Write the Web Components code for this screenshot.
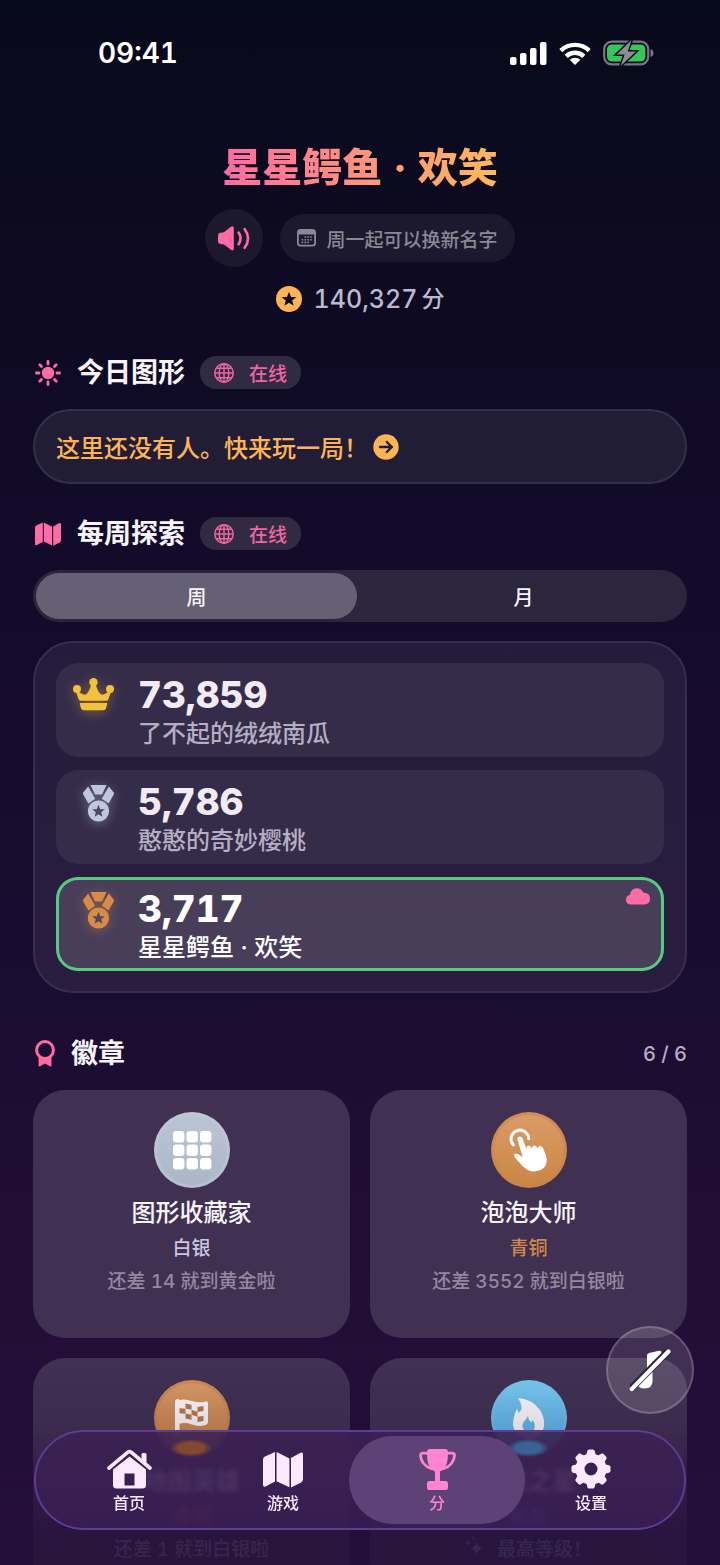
<!DOCTYPE html>
<html lang="zh-CN">
<head>
<meta charset="utf-8">
<meta name="viewport" content="width=device-width, initial-scale=1">
<title>分</title>
<style>
  html,
  body {
    margin: 0;
    height: 100%;
    background: #240e3a;
  }

  body {
    font-family: Inter, "Noto Sans CJK SC", sans-serif;
    font-weight: 500;
    font-variant-numeric: tabular-nums;
    color: #f8f4fc;
    --pink: #ff6ba3;
    --amber: #ffb454;
    --muted: #b6aec4;
    --silver: #bfc6de;
    --bronze: #d98a45;
  }
</style>
</head>
<body>
<score-screen>
  <status-bar slot="status" time="09:41"></status-bar>

  <profile-header name="星星鳄鱼 · 欢笑" hint="周一起可以换新名字" points="140,327" unit="分"></profile-header>

  <board-section icon="sun" heading="今日图形">
    <online-chip slot="extra">在线</online-chip>
    <empty-banner>这里还没有人。快来玩一局！</empty-banner>
  </board-section>

  <board-section icon="map" heading="每周探索">
    <online-chip slot="extra">在线</online-chip>
    <period-switch></period-switch>
    <score-panel>
      <score-row rank="crown" score="73,859">了不起的绒绒南瓜</score-row>
      <score-row rank="silver" score="5,786">憨憨的奇妙樱桃</score-row>
      <score-row rank="bronze" score="3,717" mine>星星鳄鱼 · 欢笑</score-row>
    </score-panel>
  </board-section>

  <board-section class="badges" icon="rosette" heading="徽章" count="6 / 6">
    <badge-grid>
      <badge-card icon="grid" tier="silver" heading="图形收藏家" level="白银">还差 14 就到黄金啦</badge-card>
      <badge-card icon="tap" tier="bronze" heading="泡泡大师" level="青铜">还差 3552 就到白银啦</badge-card>
      <badge-card icon="flag" tier="bronze" heading="地图英雄" level="青铜">还差 1 就到白银啦</badge-card>
      <badge-card icon="flame" tier="diamond" heading="连胜之星" level="钻石" max>最高等级！</badge-card>
    </badge-grid>
  </board-section>

  <music-button slot="overlay"></music-button>
  <tab-bar slot="overlay"></tab-bar>
</score-screen>

<script>
const STAR = "M0 -1 L.26 -.33 L.95 -.31 L.41 .13 L.59 .81 L0 .43 L-.59 .81 L-.41 .13 L-.95 -.31 L-.26 -.33Z";

// name: [width, height, markup]
const ICONS = {
  signal: [37, 23, `<rect x="0" y="15" width="6.5" height="8" rx="2"/><rect x="10" y="11" width="6.5" height="12" rx="2"/><rect x="20" y="6" width="6.5" height="17" rx="2"/><rect x="30" y="0" width="6.5" height="23" rx="2"/>`],
  wifi: [32, 23, `<g fill="none" stroke="currentColor" stroke-width="4.4"><path d="M1.8 8.6a20.5 20.5 0 0 1 28.4 0"/><path d="M7.2 14.3a12.7 12.7 0 0 1 17.6 0"/></g><path d="M10.6 17.8a8 8 0 0 1 10.8 0L16 23Z"/>`],
  battery: [52, 26, `<rect x="1.2" y="1.7" width="44" height="22.6" rx="7.5" fill="none" stroke="#777783" stroke-width="2.2"/><rect x="4" y="4.4" width="38.4" height="17.2" rx="5" fill="#34c759"/><path d="M47.5 9v8q3-1 3-4t-3-4Z" fill="#777783"/><path d="M28.5 0 13.6 14.4h8L17.6 26 33 11.4h-8.2Z" fill="#8d8d97" stroke="#0a0a1c" stroke-width="3" paint-order="stroke"/>`],
  speaker: [32, 25, `<path d="M0 9.5Q0 7 2.4 6.7L6 6.2 12.6 1Q15.8-1 15.8 2.4V22.2Q15.8 25.8 12.6 23.6L6 18.6 2.4 18.1Q0 17.8 0 15.3Z"/><g fill="none" stroke="currentColor" stroke-width="2.6" stroke-linecap="round"><path d="M20.6 6.6q4 5.8 0 11.6"/><path d="M26.6 3q7 9.4 0 18.8"/></g>`],
  calendar: [19, 18, `<path fill-rule="evenodd" d="M3.5 0H15.5Q19 0 19 3.5V14Q19 17.5 15.5 17.5H3.5Q0 17.5 0 14V3.5Q0 0 3.5 0ZM1.8 5.5V14Q1.8 15.8 3.6 15.8H15.4Q17.2 15.8 17.2 14V5.5Z"/><path d="M7.5 7.2h1.6v1.6H7.5zM10.3 7.2h1.6v1.6h-1.6zM13.1 7.2h1.6v1.6h-1.6zM4.6 9.9h1.6v1.6H4.6zM7.5 9.9h1.6v1.6H7.5zM10.3 9.9h1.6v1.6h-1.6zM13.1 9.9h1.6v1.6h-1.6zM4.6 12.6h1.6v1.6H4.6zM7.5 12.6h1.6v1.6H7.5zM10.3 12.6h1.6v1.6h-1.6z"/>`],
  star: [26, 26, `<circle cx="13" cy="13" r="13"/><path fill="#0e0a22" transform="translate(13 13.5) scale(7.8)" d="${STAR}"/>`],
  arrow: [26, 26, `<circle cx="13" cy="13" r="12.7"/><path d="M7 13h12M13.8 8l5 5-5 5" fill="none" stroke="#221d37" stroke-width="2.4" stroke-linecap="round" stroke-linejoin="round"/>`],
  sun: [26, 26, `<circle cx="13" cy="13" r="6.2"/><path d="M13 1.4v2.6M13 22v2.6M1.4 13h2.6M22 13h2.6M4.8 4.8l1.7 1.7M19.5 19.5l1.7 1.7M4.8 21.2l1.7-1.7M19.5 6.5l1.7-1.7" fill="none" stroke="currentColor" stroke-width="2.8" stroke-linecap="round"/>`],
  map: [26, 24, `<path d="M0 5.6Q0 4.2 1.3 3.6L7.8.6V19.8L2 22.9Q0 23.8 0 21.9ZM8.8 .6 17.2 4.8V23.6L8.8 19.6ZM18.2 4.6 24 1.3Q26 .4 26 2.3V18.4Q26 19.7 24.8 20.4L18.2 23.8Z"/>`],
  globe: [20, 20, `<g fill="none" stroke="currentColor" stroke-width="1.5"><circle cx="10" cy="10" r="9.2"/><ellipse cx="10" cy="10" rx="4.8" ry="9.2"/><path d="M10 .8v18.4M.8 10h18.4M2.5 5.2h15M2.5 14.8h15"/></g>`],
  rosette: [20, 27, `<circle cx="10" cy="10" r="8.4" fill="none" stroke="currentColor" stroke-width="3"/><path d="M3.6 17Q10 21 16.4 17V25.5Q16.4 27 15 26.2L10 23.4 5 26.2Q3.6 27 3.6 25.5Z"/>`],
  crown: [41, 33, `<circle cx="4" cy="11" r="4"/><circle cx="20.5" cy="4.2" r="4.2"/><circle cx="37" cy="11" r="4"/><path d="M2.8 13 5.5 21Q6 22.8 7.5 22.8H33.5Q35 22.8 35.5 21L38.2 13 36 13.6Q30.8 17.4 28.3 16.6 25.7 15.6 22.8 7H18.2Q15.3 15.6 12.7 16.6 10.2 17.4 5 13.6ZM6.7 25H34.3L33.4 29Q32.6 32.2 30 32.2H11Q8.4 32.2 7.6 29Z"/>`],
  medal: [31, 37, `<path d="M7.4 0H23.6L19 9.6H12ZM5.2 1.6 12.2 13.8 5.4 18.6 0 9Q-.2 8.2.1 7.8ZM25.8 1.6 18.8 13.8 25.6 18.6 31 9Q31.2 8.2 30.9 7.8Z"/><circle cx="15.5" cy="26" r="10.6"/><path fill="#4c465e" transform="translate(15.5 26.4) scale(6.6)" d="${STAR}"/>`],
  cloud: [24, 17, `<path d="M5 16.5Q0 16.5 0 11.8 0 7.6 3.8 7 5 .3 10.8.2 15 .2 17.2 4.4 24 4.6 24 10.6 24 16.5 18.2 16.5Z"/>`],
  grid: [38, 38, [0, 13.5, 27].map(y => [0, 13.5, 27].map(x => `<rect x="${x}" y="${y}" width="11.4" height="11.4" rx="3.2"/>`).join("")).join("")],
  tap: [39, 43, `<path d="M4.3 15.8A8.8 8.8 0 1 1 19.7 9.8" fill="none" stroke="currentColor" stroke-width="3" stroke-linecap="round"/><path d="M8.4 10.5Q7.9 8.2 10.3 7.5 12.7 7.2 13.5 9.3L17.2 19.5Q17.2 16.7 19.6 16.4 21.6 16.4 22.8 19.4 23 16.7 25.2 16.6 27.4 16.7 28.6 19.4 29 16.9 31.2 17.1 33.2 17.5 34.2 19.6L36.5 25Q39.5 33 35.5 38 31 43 22.5 42.3 18 41.5 14 37.5L5.8 28.5Q4.2 25.8 6.2 24.8 8.5 24.2 10.5 26L13.8 28.3Z"/>`],
  flag: [33, 38, `<path d="M0 3Q0 0 2.5 0 4 0 4.6 1 10-.6 17 2 25 4.5 30.5 2.4 33 2 33 4.5V23Q33 25.3 30.5 26 24 28 17 25.5 10 23 4.5 24.8V36Q4.5 38 2.2 38 0 38 0 36Z"/><path fill="#c07b44" d="M10.5 4.6 16.5 5.8V10.8L10.5 9.6ZM22.5 8 28.5 7V12L22.5 13ZM4.5 9.2 10.5 9.8V14.8L4.5 14.2ZM16.5 10.8 22.5 12.8V17.8L16.5 15.8ZM10.5 14.6 16.5 15.8V20.8L10.5 19.6ZM22.5 17.8 28.5 17V22L22.5 23Z"/>`],
  flame: [32, 40, `<path fill-rule="evenodd" d="M5 0Q19 1 27 12 32 20 31 28 29 40 16 40 2 39 0 27 0 19 3.8 11 5 12 5.5 15 8 12.5 8.6 11 8.5 4.5 5 0ZM15 18Q13.5 21 11 23.5 8 28 11 32 16 37 20.5 32.5 23.5 27 19.5 22L18.5 24.5Q15.5 22.5 15 18Z"/>`],
  sparkles: [18, 20, `<path d="M11.5 5Q12.3 11.7 18 12.5 12.3 13.3 11.5 20 10.7 13.3 5 12.5 10.7 11.7 11.5 5ZM3 3.5Q3.4 6.3 6 6.7 3.4 7.1 3 10 2.6 7.1 0 6.7 2.6 6.3 3 3.5ZM8 0Q8.2 1.8 10 2 8.2 2.2 8 4 7.8 2.2 6 2 7.8 1.8 8 0Z"/>`],
  nomusic: [44, 44, `<path d="M19 7.5Q19 5.6 21 5L31 2.8Q33.5 2.3 33.5 5V9.5Q33.5 11.2 31.8 11.6L24.5 13.5V33.5Q24.5 40 16.5 40.5 10 40.5 10 35.5 10 31.5 14 30.5L19 29.5Z"/><path d="M3.8 40 39.8 3.5" stroke="#2b2333" stroke-width="7"/><path d="M3.8 41 40.5 3.5" stroke="currentColor" stroke-width="4.4" stroke-linecap="round"/>`],
  house: [45, 40, `<path d="M2 19 20.6 3.4Q22.5 2 24.4 3.4L43 19" fill="none" stroke="currentColor" stroke-width="3.6" stroke-linecap="round" stroke-linejoin="round"/><path d="M34.5 5.5Q34.5 4 36 4H38Q39.5 4 39.5 5.5V14.5L34.5 10.3Z"/><path fill-rule="evenodd" d="M6 20.5 22.5 7.5 39 20.5V36Q39 39.5 35.5 39.5H9.5Q6 39.5 6 36ZM17.5 24.5V36.5H27.5V24.5Z"/>`],
  trophy: [37, 41, `<path d="M8 3Q8 0 11 0H26Q29 0 29 3C29 15 27 20 21 22.5V32H27Q29 32 29 34.5V39Q29 41 27 41H10Q8 41 8 39V34.5Q8 32 10 32H16V22.5C10 20 8 15 8 3Z"/><path d="M9 4.2H4Q1.5 4.2 1.5 6.5 2 16 13 20M28 4.2H33Q35.5 4.2 35.5 6.5 35 16 24 20" fill="none" stroke="currentColor" stroke-width="2.8"/>`],
  gear: [40, 40, `<circle cx="20" cy="20" r="11" fill="none" stroke="currentColor" stroke-width="9"/>` + [0, 45, 90, 135, 180, 225, 270, 315].map(a => `<path transform="rotate(${a} 20 20)" d="M15 7.5 16.3 2Q16.8.5 18 .5H22Q23.2.5 23.7 2L25 7.5Z"/>`).join("")]
};

class UiIcon extends HTMLElement {
  connectedCallback() {
    if (this.shadowRoot) return;
    const [w, h, markup] = ICONS[this.getAttribute("name")];
    this.attachShadow({ mode: "open" }).innerHTML = `
      <style>
        :host { display: block; flex: none; }
        svg { display: block; overflow: visible; }
      </style>
      <svg width="${this.getAttribute("width") || w}" viewBox="0 0 ${w} ${h}" fill="currentColor" aria-hidden="true">${markup}</svg>
    `;
  }
}

class StatusBar extends HTMLElement {
  connectedCallback() {
    this.attachShadow({ mode: "open" }).innerHTML = `
      <style>
        :host {
          display: flex;
          align-items: center;
          justify-content: space-between;
          height: 106px;
          padding: 0 65px 0 98px;
          color: #fff;
        }
        time { font-size: 28px; font-weight: 600; }
        .icons { display: flex; align-items: center; gap: 12px; }
      </style>
      <time>${this.getAttribute("time")}</time>
      <div class="icons">
        <ui-icon name="signal"></ui-icon>
        <ui-icon name="wifi"></ui-icon>
        <ui-icon name="battery"></ui-icon>
      </div>
    `;
  }
}

class ProfileHeader extends HTMLElement {
  connectedCallback() {
    this.attachShadow({ mode: "open" }).innerHTML = `
      <style>
        :host {
          display: flex;
          flex-direction: column;
          align-items: center;
          padding-top: 34px;
        }
        h1 {
          margin: 0 0 13px;
          font-size: 40px;
          font-weight: 800;
          line-height: 56px;
          color: transparent;
          background: linear-gradient(90deg, #ff6ba3, #ffb85a);
          background-clip: text;
          -webkit-background-clip: text;
        }
        .actions { display: flex; align-items: center; gap: 17px; }
        button {
          display: grid;
          place-items: center;
          width: 58px;
          height: 58px;
          padding: 0;
          border: 0;
          border-radius: 50%;
          background: #1c192f;
          color: var(--pink);
        }
        .hint {
          display: flex;
          align-items: center;
          gap: 10px;
          height: 48px;
          padding: 0 17px;
          border-radius: 24px;
          background: #1c192f;
          color: #8b8896;
          font-size: 19px;
        }
        .points {
          display: flex;
          align-items: center;
          gap: 12px;
          margin: 16px 0 0;
          font-size: 25px;
          line-height: 32px;
          color: #bdb9cc;
        }
        .points ui-icon { color: var(--amber); }
        .points span { display: flex; gap: 4px; }
        .points small { font-size: 23px; }
      </style>
      <h1>${this.getAttribute("name")}</h1>
      <div class="actions">
        <button type="button" aria-label="朗读名字"><ui-icon name="speaker"></ui-icon></button>
        <div class="hint"><ui-icon name="calendar"></ui-icon><span>${this.getAttribute("hint")}</span></div>
      </div>
      <p class="points">
        <ui-icon name="star"></ui-icon>
        <span>${this.getAttribute("points")}<small>${this.getAttribute("unit")}</small></span>
      </p>
    `;
  }
}

class BoardSection extends HTMLElement {
  connectedCallback() {
    this.attachShadow({ mode: "open" }).innerHTML = `
      <style>
        :host { display: block; margin-top: 33px; }
        header {
          display: flex;
          align-items: center;
          height: 33px;
          margin-bottom: 20px;
        }
        ui-icon { margin: 0 16px 0 2px; color: var(--pink); }
        h2 { margin: 0 15px 0 0; font-size: 27px; font-weight: 700; line-height: 35px; }
        .count { margin-left: auto; font-size: 20px; color: var(--muted); }
      </style>
      <header>
        <ui-icon name="${this.getAttribute("icon")}"></ui-icon>
        <h2>${this.getAttribute("heading")}</h2>
        <slot name="extra"></slot>
        <span class="count">${this.getAttribute("count") || ""}</span>
      </header>
      <slot></slot>
    `;
  }
}

class OnlineChip extends HTMLElement {
  connectedCallback() {
    this.attachShadow({ mode: "open" }).innerHTML = `
      <style>
        :host {
          display: flex;
          align-items: center;
          gap: 15px;
          height: 33px;
          padding: 0 14px;
          border-radius: 16px;
          background: #302a42;
          color: #ee66a2;
          font-size: 19px;
        }
      </style>
      <ui-icon name="globe"></ui-icon>
      <slot></slot>
    `;
  }
}

class EmptyBanner extends HTMLElement {
  connectedCallback() {
    this.attachShadow({ mode: "open" }).innerHTML = `
      <style>
        :host { display: block; }
        a {
          display: flex;
          align-items: center;
          gap: 5px;
          box-sizing: border-box;
          min-height: 75px;
          padding: 0 21px;
          border: 2px solid #353049;
          border-radius: 38px;
          background: #221d37;
          color: var(--amber);
          font-size: 24px;
          text-decoration: none;
        }
      </style>
      <a href="#play"><span><slot></slot></span><ui-icon name="arrow"></ui-icon></a>
    `;
  }
}

class PeriodSwitch extends HTMLElement {
  connectedCallback() {
    this.attachShadow({ mode: "open" }).innerHTML = `
      <style>
        :host {
          display: flex;
          gap: 6px;
          height: 46px;
          margin-bottom: 19px;
          padding: 3px;
          border-radius: 26px;
          background: #2b253d;
        }
        button {
          flex: 1;
          padding: 0;
          border: 0;
          border-radius: 23px;
          background: none;
          color: inherit;
          font: inherit;
          font-size: 20px;
        }
        button[aria-pressed="true"] { background: #656074; }
      </style>
      <button type="button" aria-pressed="true">周</button>
      <button type="button" aria-pressed="false">月</button>
    `;
    const buttons = this.shadowRoot.querySelectorAll("button");
    buttons.forEach(button => {
      button.addEventListener("click", () => {
        buttons.forEach(b => b.setAttribute("aria-pressed", b === button));
      });
    });
  }
}

class ScorePanel extends HTMLElement {
  connectedCallback() {
    this.attachShadow({ mode: "open" }).innerHTML = `
      <style>
        :host {
          display: flex;
          flex-direction: column;
          gap: 13px;
          padding: 20px 21px;
          border: 2px solid #372e4d;
          border-radius: 40px;
          background: linear-gradient(#231d3b, #2a1d3f);
        }
      </style>
      <slot></slot>
    `;
  }
}

class ScoreRow extends HTMLElement {
  connectedCallback() {
    const rank = this.getAttribute("rank");
    const mine = this.hasAttribute("mine");
    this.attachShadow({ mode: "open" }).innerHTML = `
      <style>
        :host {
          position: relative;
          display: flex;
          gap: 24px;
          padding: 12px 16px 4px;
          border-radius: 22px;
          background: #352c49;
        }
        :host([mine]) {
          background: #483e5a;
          box-shadow: inset 0 0 0 3px #56cb7d;
        }
        .rank {
          display: flex;
          justify-content: flex-end;
          width: 42px;
          padding-top: 3px;
        }
        .crown { color: #f3c13c; filter: drop-shadow(0 2px 6px #f3c13c66); }
        .silver { color: var(--silver); filter: drop-shadow(0 2px 6px #bfc6de66); }
        .bronze { color: var(--bronze); filter: drop-shadow(0 2px 6px #d98a4566); }
        strong { display: block; font-size: 37px; font-weight: 800; line-height: 40px; color: #f0ebf4; }
        .name { font-size: 24px; line-height: 38px; color: var(--muted); }
        :host([mine]) strong,
        :host([mine]) .name { color: #fff; }
        .cloud { position: absolute; top: 11px; right: 14px; color: var(--pink); }
      </style>
      <div class="rank ${rank}"><ui-icon name="${rank === "crown" ? "crown" : "medal"}"></ui-icon></div>
      <div>
        <strong>${this.getAttribute("score")}</strong>
        <div class="name"><slot></slot></div>
      </div>
      ${mine ? `<ui-icon class="cloud" name="cloud"></ui-icon>` : ""}
    `;
  }
}

class BadgeGrid extends HTMLElement {
  connectedCallback() {
    this.attachShadow({ mode: "open" }).innerHTML = `
      <style>
        :host { display: grid; grid-template-columns: 1fr 1fr; gap: 20px; }
      </style>
      <slot></slot>
    `;
  }
}

class BadgeCard extends HTMLElement {
  connectedCallback() {
    const max = this.hasAttribute("max");
    this.attachShadow({ mode: "open" }).innerHTML = `
      <style>
        :host {
          display: flex;
          flex-direction: column;
          align-items: center;
          box-sizing: border-box;
          min-height: 248px;
          padding: 22px 16px;
          border-radius: 32px;
          background: #403152;
        }
        .medallion {
          display: grid;
          place-items: center;
          box-sizing: border-box;
          width: 76px;
          height: 76px;
          border-radius: 50%;
          color: #fff;
          border: 3px solid #c9854899;
          background: linear-gradient(#dc9c67, #c98544) border-box;
        }
        :host([tier="silver"]) .medallion { border-color: #c3c8de88; background: linear-gradient(#bcc5d4, #aab7c6) border-box; }
        :host([tier="diamond"]) .medallion { border-color: #7ac6ee88; background: linear-gradient(#7accf4, #55b3e8) border-box; }
        h3 { margin: 7px 0 4px; font-size: 24px; font-weight: 500; line-height: 36px; }
        .level { margin-bottom: 5px; font-size: 19px; line-height: 28px; color: #d08a4c; }
        :host([tier="silver"]) .level { color: #c9c6dd; }
        :host([tier="diamond"]) .level { color: #5bb8ea; }
        .progress { display: flex; gap: 14px; font-size: 19px; line-height: 28px; color: #94879f; }
        :host([max]) .progress { color: #7a94c0; }
      </style>
      <div class="medallion"><ui-icon name="${this.getAttribute("icon")}"></ui-icon></div>
      <h3>${this.getAttribute("heading")}</h3>
      <div class="level">${this.getAttribute("level")}</div>
      <div class="progress">${max ? `<ui-icon name="sparkles"></ui-icon>` : ""}<span><slot></slot></span></div>
    `;
  }
}

class MusicButton extends HTMLElement {
  connectedCallback() {
    this.attachShadow({ mode: "open" }).innerHTML = `
      <style>
        :host { position: fixed; right: 26px; bottom: 151px; }
        button {
          display: grid;
          place-items: center;
          width: 88px;
          height: 88px;
          padding: 0;
          border: 2px solid #ffffff30;
          border-radius: 50%;
          background: #ffffff24;
          color: #fff;
        }
      </style>
      <button type="button" aria-label="打开音乐"><ui-icon name="nomusic"></ui-icon></button>
    `;
  }
}

class TabBar extends HTMLElement {
  connectedCallback() {
    const tabs = [
      ["house", "首页", "#home"],
      ["map", "游戏", "#games"],
      ["trophy", "分", "#scores"],
      ["gear", "设置", "#settings"]
    ];
    this.attachShadow({ mode: "open" }).innerHTML = `
      <style>
        :host { position: fixed; left: 34px; right: 34px; bottom: 35px; }
        nav {
          display: flex;
          padding: 4px 16px;
          border: 2px solid #5f3c92;
          border-radius: 50px;
          /* glints of the medallions that lie under the glass */
          background:
            radial-gradient(closest-side, #824830 60%, transparent) 134px 7px / 42px 18px no-repeat,
            radial-gradient(closest-side, #3a6297 60%, transparent) 471px 7px / 42px 18px no-repeat,
            linear-gradient(#3b2153e6 30%, #3f2159b3 60%);
          backdrop-filter: blur(2px);
        }
        a {
          position: relative;
          z-index: 0;
          flex: 1;
          display: flex;
          flex-direction: column;
          align-items: center;
          height: 77px;
          padding-top: 11px;
          color: #fbeaff;
          font-size: 16px;
          line-height: 24px;
          text-decoration: none;
        }
        .glyph { display: grid; place-items: center; height: 44px; }
        a[aria-current]::before {
          content: "";
          position: absolute;
          z-index: -1;
          inset: 0 -11px;
          border-radius: 44px;
          background: #5c4277;
        }
        a[aria-current] { color: #ff85d0; }
      </style>
      <nav>
        ${tabs.map(([icon, label, href]) => `
          <a href="${href}" ${icon === "trophy" ? `aria-current="page"` : ""}>
            <span class="glyph"><ui-icon name="${icon}" ${icon === "map" ? `width="40"` : ""}></ui-icon></span>
            <span>${label}</span>
          </a>
        `).join("")}
      </nav>
    `;
  }
}

class ScoreScreen extends HTMLElement {
  connectedCallback() {
    this.attachShadow({ mode: "open" }).innerHTML = `
      <style>
        :host {
          display: block;
          height: 100vh;
          overflow: hidden;
          background: linear-gradient(#070a1a, #0c0a1e 10%, #0e0a23 20%, #140b2b 38%, #1a0c30 60%, #210e36 80%, #250f3a);
        }
        main {
          height: 100%;
          box-sizing: border-box;
          overflow-y: auto;
          scrollbar-width: none;
        }
        .content { padding: 0 33px 160px; }
        ::slotted(board-section:first-of-type) { margin-top: 41px; }
        ::slotted(.badges) { margin-top: 44px; }
        .fade {
          position: fixed;
          inset: auto 0 0;
          height: 200px;
          background: linear-gradient(#240e3a00, #240e3a28 32%, #240e3a98 60%, #240e3ad0 85%);
          pointer-events: none;
        }
      </style>
      <main>
        <slot name="status"></slot>
        <div class="content"><slot></slot></div>
      </main>
      <div class="fade"></div>
      <slot name="overlay"></slot>
    `;
  }
}

customElements.define("ui-icon", UiIcon);
customElements.define("status-bar", StatusBar);
customElements.define("profile-header", ProfileHeader);
customElements.define("online-chip", OnlineChip);
customElements.define("empty-banner", EmptyBanner);
customElements.define("period-switch", PeriodSwitch);
customElements.define("score-row", ScoreRow);
customElements.define("score-panel", ScorePanel);
customElements.define("badge-card", BadgeCard);
customElements.define("badge-grid", BadgeGrid);
customElements.define("board-section", BoardSection);
customElements.define("music-button", MusicButton);
customElements.define("tab-bar", TabBar);
customElements.define("score-screen", ScoreScreen);
</script>
</body>
</html>
